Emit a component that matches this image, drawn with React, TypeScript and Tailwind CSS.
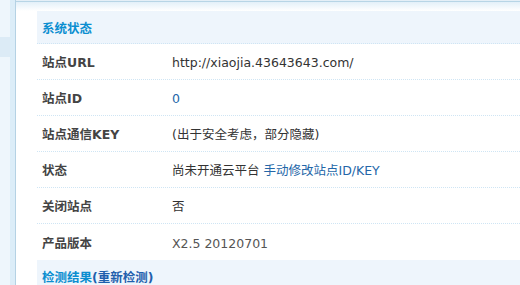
import React from 'react';

type Row = {
  label: string;
  value: React.ReactNode;
};

const rows: Row[] = [
  { label: '站点URL', value: <span className="text-[#333]">http://xiaojia.43643643.com/</span> },
  { label: '站点ID', value: <a className="text-[#2366a8]">0</a> },
  { label: '站点通信KEY', value: <span className="text-[#333]">(出于安全考虑，部分隐藏)</span> },
  {
    label: '状态',
    value: (
      <span className="text-[#333]">
        尚未开通云平台 <a className="text-[#2366a8]">手动修改站点ID/KEY</a>
      </span>
    ),
  },
  { label: '关闭站点', value: <span className="text-[#333]">否</span> },
  { label: '产品版本', value: <span className="text-[#555]">X2.5 20120701</span> },
];

const App: React.FC = () => {
  return (
    <div className="w-[520px] h-[285px] overflow-hidden flex bg-white text-[12.5px] font-['DejaVu_Sans','Noto_Sans_CJK_SC',sans-serif]">
      {/* Left menu strip */}
      <div className="flex shrink-0">
        <div className="w-[10px] flex flex-col">
          <div className="h-[37px] shrink-0 bg-[#eef6fc]" />
          <div className="h-[20px] shrink-0 bg-[#dcebf6]" />
          <div className="flex-1 bg-[#eef6fc]" />
        </div>
        <div className="w-[5px] bg-[#dcedf8]" />
        <div className="w-px bg-[#b5d2e4]" />
      </div>

      {/* Main */}
      <div className="flex-1 flex flex-col min-w-0">
        <div className="h-px shrink-0 bg-[#e4eff7]" />
        <div className="h-px shrink-0 bg-[#b7d5e6]" />
        <div className="h-[9px] shrink-0 bg-gradient-to-b from-[#e3f0f9] to-white" />

        <div className="pl-[21px] flex flex-col shrink-0">
          <div className="h-[33px] shrink-0 flex items-center pl-[5px] pt-[4px] bg-[#eef5fc] border-b border-dotted border-[#cfe5f4]">
            <h3 className="font-bold text-[#0b8ed0]">系统状态</h3>
          </div>

          {rows.map((row, idx) => (
            <div
              key={row.label}
              className={`h-[36px] shrink-0 flex items-center pt-[4px] ${
                idx < rows.length - 1 ? 'border-b border-dotted border-[#cfe5f4]' : ''
              }`}
            >
              <div className="w-[135px] shrink-0 pl-[5px] font-bold text-[#444]">{row.label}</div>
              <div className="whitespace-nowrap">{row.value}</div>
            </div>
          ))}

          <div className="h-[33px] shrink-0 flex items-center pl-[5px] pt-[4px] bg-[#eef5fc]">
            <h3 className="font-bold text-[#0b8ed0]">
              检测结果<a className="text-[#1f5fad]">(重新检测)</a>
            </h3>
          </div>
        </div>
      </div>
    </div>
  );
};

export default App;
